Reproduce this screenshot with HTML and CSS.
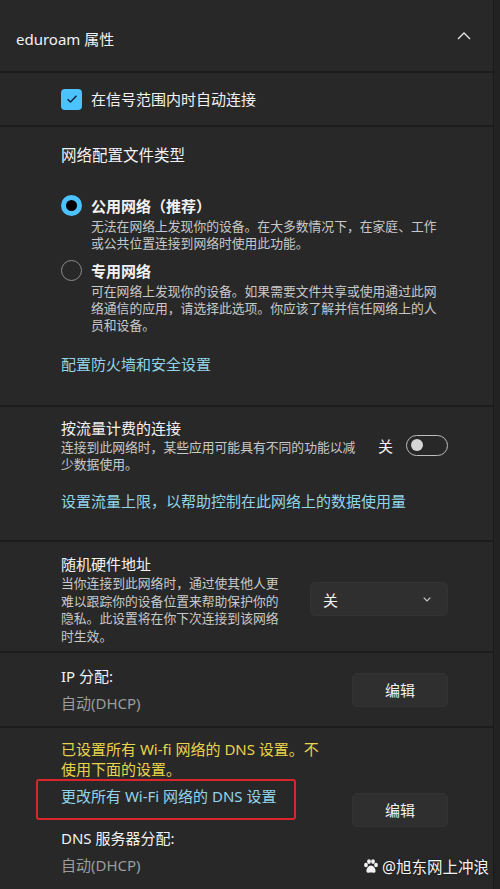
FILE: index.html
```html
<!DOCTYPE html>
<html lang="zh-CN">
  <head>
    <meta charset="UTF-8" />
    <meta name="viewport" content="width=device-width, initial-scale=1.0" />
    <title>eduroam 属性</title>
    <link rel="stylesheet" href="styles.css">
  </head>

  <body>
    <div class="panel">
      <!-- 标题 -->
      <div class="head">
        <span class="head-title">eduroam 属性</span>
        <svg class="head-arrow" width="14" height="8" viewBox="0 0 14 8">
          <path d="M1 7 L7 1 L13 7" fill="none" stroke="#e6e6e6" stroke-width="1.3" />
        </svg>
      </div>

      <div class="sec sec-check">
        <span class="check">
          <svg width="12" height="10" viewBox="0 0 12 10">
            <path d="M1.5 5.2 L4.5 8 L10.5 1.8" fill="none" stroke="#10243a" stroke-width="1.5" />
          </svg>
        </span>
        <span class="title">在信号范围内时自动连接</span>
      </div>

      <!-- 网络配置文件类型 -->
      <div class="sec sec-profile">
        <div class="title">网络配置文件类型</div>
        <div class="radio-item first">
          <span class="radio on"></span>
          <div>
            <div class="title bold">公用网络（推荐）</div>
            <div class="desc w-radio">无法在网络上发现你的设备。在大多数情况下，在家庭、工作或公共位置连接到网络时使用此功能。</div>
          </div>
        </div>
        <div class="radio-item">
          <span class="radio"></span>
          <div>
            <div class="title bold">专用网络</div>
            <div class="desc w-radio">可在网络上发现你的设备。如果需要文件共享或使用通过此网络通信的应用，请选择此选项。你应该了解并信任网络上的人员和设备。</div>
          </div>
        </div>
        <a class="link link-fw" href="javascript:">配置防火墙和安全设置</a>
      </div>

      <!-- 按流量计费 -->
      <div class="sec sec-meter">
        <div class="row">
          <div>
            <div class="title">按流量计费的连接</div>
            <div class="desc w-meter">连接到此网络时，某些应用可能具有不同的功能以减少数据使用。</div>
          </div>
          <div class="toggle-wrap">
            <span class="toggle-label">关</span>
            <span class="toggle"><span class="knob"></span></span>
          </div>
        </div>
        <a class="link link-limit" href="javascript:">设置流量上限，以帮助控制在此网络上的数据使用量</a>
      </div>

      <!-- 随机硬件地址 -->
      <div class="sec sec-mac">
        <div class="row">
          <div>
            <div class="title">随机硬件地址</div>
            <div class="desc w-mac">当你连接到此网络时，通过使其他人更难以跟踪你的设备位置来帮助保护你的隐私。此设置将在你下次连接到该网络时生效。</div>
          </div>
          <div class="select">
            <span>关</span>
            <svg width="8" height="5" viewBox="0 0 8 5">
              <path d="M0.7 0.7 L4 4 L7.3 0.7" fill="none" stroke="#cfcfcf" stroke-width="1.1" />
            </svg>
          </div>
        </div>
      </div>

      <!-- IP 分配 -->
      <div class="sec sec-ip">
        <div class="row">
          <div>
            <div class="title">IP 分配:</div>
            <div class="value">自动(DHCP)</div>
          </div>
          <button class="btn">编辑</button>
        </div>
      </div>

      <!-- DNS -->
      <div class="sec sec-dns">
        <div class="row">
          <div>
            <div class="warn">已设置所有 Wi-fi 网络的 DNS 设置。不使用下面的设置。</div>
            <div class="mark">
              <a class="link" href="javascript:">更改所有 Wi-Fi 网络的 DNS 设置</a>
            </div>
            <div class="title dns-label">DNS 服务器分配:</div>
            <div class="value">自动(DHCP)</div>
          </div>
          <button class="btn btn-dns">编辑</button>
        </div>
      </div>
    </div>

    <div class="watermark">
      <svg width="16" height="15" viewBox="0 0 16 15">
        <ellipse cx="3" cy="6" rx="1.9" ry="2.3" fill="#f2f2f2" />
        <ellipse cx="6" cy="2.6" rx="1.9" ry="2.3" fill="#f2f2f2" />
        <ellipse cx="10" cy="2.6" rx="1.9" ry="2.3" fill="#f2f2f2" />
        <ellipse cx="13" cy="6" rx="1.9" ry="2.3" fill="#f2f2f2" />
        <path d="M8 6.5 C5.5 6.5 3 10 3.5 12.5 C4 14.5 6.5 13.6 8 13.6 C9.5 13.6 12 14.5 12.5 12.5 C13 10 10.5 6.5 8 6.5 Z" fill="#f2f2f2" />
      </svg>
      <span>@旭东网上冲浪</span>
    </div>
  </body>
</html>
```

FILE: styles.css
```css
* {
  margin: 0;
  padding: 0;
  box-sizing: border-box;
}

body {
  width: 500px;
  height: 889px;
  overflow: hidden;
  background: #222;
  color: #f2f2f2;
  font-family: "Noto Sans", "Noto Sans CJK SC", sans-serif;
  position: relative;
}

.panel {
  width: 494px;
  border-right: 1px solid #1a1a1a;
  background: #282828;
}

.head {
  height: 73px;
  border-bottom: 2px solid #1c1c1c;
  display: flex;
  align-items: center;
  justify-content: space-between;
  padding: 5px 22px 0 16px;
}
.head-title {
  font-size: 15px;
}
.head-arrow {
  margin-top: -4px;
}

.sec {
  border-bottom: 2px solid #1c1c1c;
  padding: 0 45px 0 61px;
}
.sec:last-child {
  border-bottom: 0;
  height: 161px;
}

.title {
  font-size: 15px;
  line-height: 22px;
  color: #f2f2f2;
}
.bold {
  font-weight: 700;
}
.desc {
  font-size: 12.8px;
  line-height: 17px;
  color: #c8c8c8;
}
.value {
  font-size: 15px;
  line-height: 22px;
  color: #9c9c9c;
  margin-top: 5px;
}
.link {
  display: block;
  font-size: 15px;
  line-height: 22px;
  color: #92d4e8;
  text-decoration: none;
}

.row {
  display: flex;
  align-items: center;
  justify-content: space-between;
}

/* 自动连接 */
.sec-check {
  height: 54px;
  display: flex;
  align-items: center;
  gap: 9px;
}
.check {
  width: 21px;
  height: 21px;
  border-radius: 4px;
  background: #4cc2ff;
  display: flex;
  align-items: center;
  justify-content: center;
}

/* 配置文件类型 */
.sec-profile {
  padding-top: 17px;
  padding-bottom: 30px;
}
.sec-profile > .title {
  font-size: 15.5px;
}
.radio-item {
  display: flex;
  gap: 9px;
  margin-top: 8px;
}
.radio-item.first {
  margin-top: 29px;
}
.radio-item .desc {
  margin-top: 1px;
}
.radio {
  flex: none;
  width: 21px;
  height: 21px;
  border-radius: 50%;
  border: 1.5px solid #8d8d8d;
}
.radio.on {
  border: 5.5px solid #4cc2ff;
  background: #000;
}
.w-radio {
  width: 350px;
}
.link-fw {
  margin-top: 19px;
}

/* 按流量计费 */
.sec-meter {
  padding-top: 10px;
  padding-bottom: 28px;
}
.w-meter {
  width: 300px;
}
.toggle-wrap {
  display: flex;
  align-items: center;
  gap: 13px;
}
.toggle-label {
  font-size: 15px;
}
.toggle {
  width: 42px;
  height: 21px;
  border-radius: 11px;
  border: 1.5px solid #bdbdbd;
  display: flex;
  align-items: center;
  padding-left: 4px;
}
.knob {
  width: 12px;
  height: 12px;
  border-radius: 50%;
  background: #d6d6d6;
}
.link-limit {
  margin-top: 17px;
}

/* 随机硬件地址 */
.sec-mac {
  padding-top: 11px;
  padding-bottom: 6px;
}
.sec-mac .desc {
  line-height: 17.5px;
}
.w-mac {
  width: 222px;
}
.select {
  width: 138px;
  height: 34px;
  border-radius: 5px;
  background: #2f2f2f;
  border: 1px solid #333;
  display: flex;
  align-items: center;
  justify-content: space-between;
  padding: 0 16px 0 12px;
  font-size: 15px;
}

/* IP */
.sec-ip {
  padding-top: 12px;
  padding-bottom: 12px;
}
.btn {
  width: 96px;
  height: 34px;
  border: 1px solid #333;
  border-radius: 5px;
  background: #2f2f2f;
  color: #f2f2f2;
  font-family: "Noto Sans", "Noto Sans CJK SC", sans-serif;
  font-size: 15px;
}

/* DNS */
.sec-dns {
  padding-top: 11px;
}
.warn {
  width: 262px;
  font-size: 15px;
  line-height: 20px;
  color: #e8d44c;
}
.mark {
  width: 260px;
  height: 41px;
  margin: 0 0 0 -25px;
  padding: 4px 0 0 23px;
  border: 2px solid #d9252b;
  border-radius: 3px;
}
.dns-label {
  margin-top: 7px;
}
.btn-dns {
  margin-top: 4px;
}

.watermark {
  position: absolute;
  left: 363px;
  top: 855px;
  display: flex;
  align-items: center;
  gap: 3px;
  font-size: 15.5px;
  color: #f4f4f4;
  text-shadow: 0 0 2px rgba(0, 0, 0, 0.6);
}
```
